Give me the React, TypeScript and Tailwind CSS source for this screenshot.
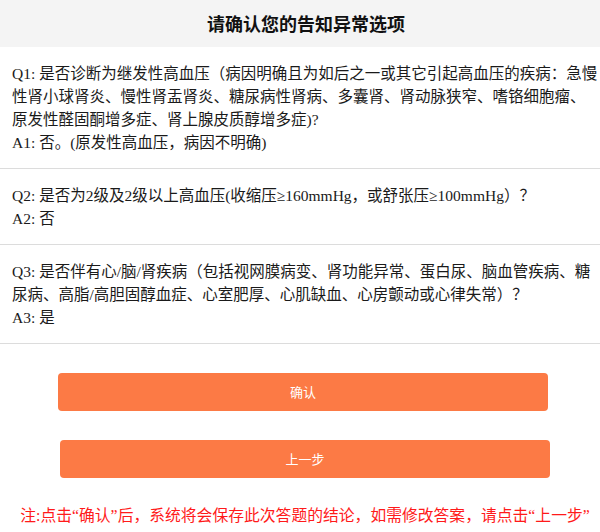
import React from 'react';

interface QA {
  label: string;
  q: string[];
  a: string;
}

// 按截图的折行拆分
const items: QA[] = [
  {
    label: '1',
    q: [
      '是否诊断为继发性高血压（病因明确且为如后之一或其它引起高血压的疾病：急慢',
      '性肾小球肾炎、慢性肾盂肾炎、糖尿病性肾病、多囊肾、肾动脉狭窄、嗜铬细胞瘤、',
      '原发性醛固酮增多症、肾上腺皮质醇增多症)?',
    ],
    a: '否。(原发性高血压，病因不明确)',
  },
  {
    label: '2',
    q: ['是否为2级及2级以上高血压(收缩压≥160mmHg，或舒张压≥100mmHg）？'],
    a: '否',
  },
  {
    label: '3',
    q: [
      '是否伴有心/脑/肾疾病（包括视网膜病变、肾功能异常、蛋白尿、脑血管疾病、糖',
      '尿病、高脂/高胆固醇血症、心室肥厚、心肌缺血、心房颤动或心律失常）？',
    ],
    a: '是',
  },
];

const serif = 'font-["Liberation_Serif","Noto_Sans_CJK_SC",serif]';

export default function App() {
  return (
    <div className="w-[600px] h-[532px] bg-white overflow-hidden">
      {/* 标题 */}
      <div className="h-[47px] bg-[#f4f4f4] flex items-center justify-center pl-[12px]">
        <h1 className='text-[18px] font-bold text-[#111] font-["Noto_Sans_CJK_SC",sans-serif]'>
          请确认您的告知异常选项
        </h1>
      </div>

      {/* 问题列表 */}
      <div>
        {items.map((it) => (
          <div
            key={it.label}
            className={`pl-[12px] py-[14.5px] border-b border-[#dcdcdc] text-[15.5px] leading-[23px] text-[#1a1a1a] whitespace-nowrap ${serif}`}
          >
            {it.q.map((line, i) => (
              <p key={i}>
                {i === 0 ? `Q${it.label}: ` : ''}
                {line}
              </p>
            ))}
            <p>
              A{it.label}: {it.a}
            </p>
          </div>
        ))}
      </div>

      {/* 按钮 */}
      <div className="flex flex-col pt-[29px] gap-[29px]">
        <button className='ml-[58px] w-[490px] h-[38px] rounded-[4px] bg-[#fc7a45] text-white text-[13px] font-["Noto_Sans_CJK_SC",sans-serif]'>
          确认
        </button>
        <button className='ml-[60px] w-[490px] h-[38px] rounded-[4px] bg-[#fc7a45] text-white text-[13px] font-["Noto_Sans_CJK_SC",sans-serif]'>
          上一步
        </button>
      </div>

      <p className={`mt-[28px] pl-[10px] text-center text-[15.8px] leading-[20px] text-[#ff1a1a] whitespace-nowrap ${serif}`}>
        注:点击“确认”后，系统将会保存此次答题的结论，如需修改答案，请点击“上一步”
      </p>
    </div>
  );
}
